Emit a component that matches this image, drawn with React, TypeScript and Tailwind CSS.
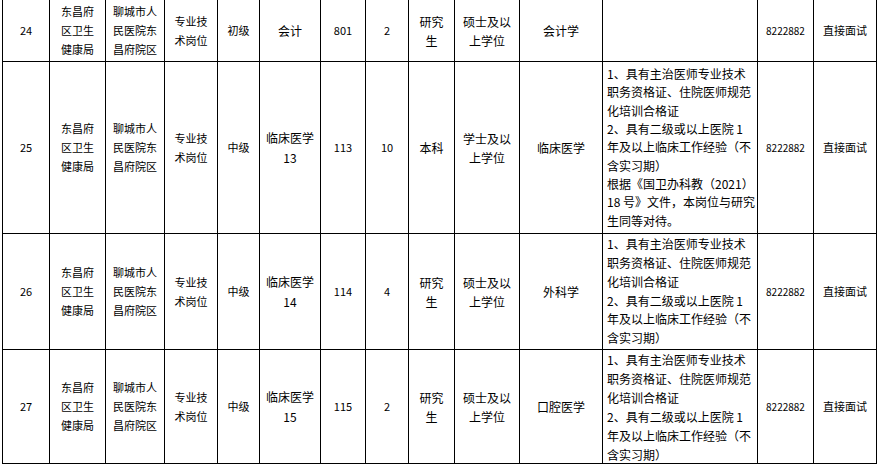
import React from 'react';

type Row = {
  no: string;
  level: string;
  post: string[];
  code: string;
  count: string;
  edu: string[];
  degree: string[];
  major: string;
  req: string[];
  leading: string;
};

const ROWS: Row[] = [
  {
    no: '24',
    level: '初级',
    post: ['会计'],
    code: '801',
    count: '2',
    edu: ['研究', '生'],
    degree: ['硕士及以', '上学位'],
    major: '会计学',
    req: [],
    leading: 'leading-[19px]',
  },
  {
    no: '25',
    level: '中级',
    post: ['临床医学', '13'],
    code: '113',
    count: '10',
    edu: ['本科'],
    degree: ['学士及以', '上学位'],
    major: '临床医学',
    req: [
      '1、具有主治医师专业技术',
      '职务资格证、住院医师规范',
      '化培训合格证',
      '2、具有二级或以上医院 1',
      '年及以上临床工作经验（不',
      '含实习期）',
      '根据《国卫办科教（2021）',
      '18 号》文件，本岗位与研究',
      '生同等对待。',
    ],
    leading: 'leading-[18.3px]',
  },
  {
    no: '26',
    level: '中级',
    post: ['临床医学', '14'],
    code: '114',
    count: '4',
    edu: ['研究', '生'],
    degree: ['硕士及以', '上学位'],
    major: '外科学',
    req: [
      '1、具有主治医师专业技术',
      '职务资格证、住院医师规范',
      '化培训合格证',
      '2、具有二级或以上医院 1',
      '年及以上临床工作经验（不',
      '含实习期）',
    ],
    leading: 'leading-[18.8px]',
  },
  {
    no: '27',
    level: '中级',
    post: ['临床医学', '15'],
    code: '115',
    count: '2',
    edu: ['研究', '生'],
    degree: ['硕士及以', '上学位'],
    major: '口腔医学',
    req: [
      '1、具有主治医师专业技术',
      '职务资格证、住院医师规范',
      '化培训合格证',
      '2、具有二级或以上医院 1',
      '年及以上临床工作经验（不',
      '含实习期）',
    ],
    leading: 'leading-[19px]',
  },
];

function Cell({
  lines,
  className = '',
}: {
  lines: string[];
  className?: string;
}) {
  return (
    <div className={`bg-white flex flex-col items-center justify-center text-center text-black ${className}`}>
      {lines.map((l, i) => (
        <span key={i} className="whitespace-nowrap">
          {l}
        </span>
      ))}
    </div>
  );
}

export default function App() {
  return (
    <div className="w-[878px] h-[465px] bg-white overflow-hidden font-['Noto_Sans_CJK_SC','Liberation_Sans',sans-serif]">
      <div className="ml-[2px] w-[875px] bg-black px-px pb-px grid gap-px grid-cols-[46px_55px_58px_52px_41px_60px_44px_42px_45px_64px_82px_154px_55px_62px] grid-rows-[61px_171px_115px_113px]">
        {ROWS.map((r) => (
          <React.Fragment key={r.no}>
            <Cell lines={[r.no]} className="text-[11px]" />
            <Cell lines={['东昌府', '区卫生', '健康局']} className="text-[11px] leading-[19px]" />
            <Cell lines={['聊城市人', '民医院东', '昌府院区']} className="text-[11px] leading-[19px]" />
            <Cell lines={['专业技', '术岗位']} className="text-[11px] leading-[19px]" />
            <Cell lines={[r.level]} className="text-[11px]" />
            <Cell lines={r.post} className="text-[12px] leading-[20px]" />
            <Cell lines={[r.code]} className="text-[11px]" />
            <Cell lines={[r.count]} className="text-[11px]" />
            <Cell lines={r.edu} className="text-[12px] leading-[19px]" />
            <Cell lines={r.degree} className="text-[12px] leading-[19px]" />
            <Cell lines={[r.major]} className="text-[12px]" />
            <div className={`bg-white flex flex-col justify-center pl-1 text-[12px] text-black ${r.leading}`}>
              {r.req.map((l, i) => (
                <span key={i} className="whitespace-nowrap">
                  {l}
                </span>
              ))}
            </div>
            <Cell lines={['8222882']} className="text-[10px] text-[#222]" />
            <Cell lines={['直接面试']} className="text-[11px]" />
          </React.Fragment>
        ))}
      </div>
    </div>
  );
}
